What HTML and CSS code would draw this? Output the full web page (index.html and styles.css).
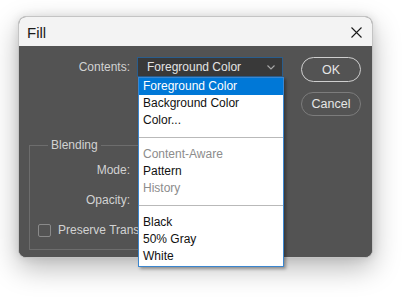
FILE: index.html
```html
<!DOCTYPE html>
<html>
<head>
<meta charset="utf-8">
<link rel="stylesheet" href="styles.css">
</head>
<body>
<div class="dialog">
  <div class="titlebar">
    <span class="title">Fill</span>
    <svg class="close" width="11" height="11" viewBox="0 0 11 11"><path d="M0.5 0.5 L10.5 10.5 M10.5 0.5 L0.5 10.5" stroke="#1a1a1a" stroke-width="1.1" fill="none"/></svg>
  </div>
  <div class="content">
    <div class="main">
      <div class="row contents-row">
        <span class="lbl lbl-outer">Contents:</span>
        <div class="select">
          <span>Foreground Color</span>
          <svg class="chev" width="8" height="5" viewBox="0 0 8 5"><path d="M0.5 0.5 L4 4 L7.5 0.5" stroke="#a8a8a8" stroke-width="1.1" fill="none"/></svg>
        </div>
      </div>
      <fieldset class="group">
        <legend class="legend">Blending</legend>
        <div class="row grow-row"><span class="lbl">Mode:</span></div>
        <div class="row grow-row"><span class="lbl">Opacity:</span></div>
        <div class="row check-row"><span class="checkbox"></span><span class="check-label">Preserve Transparency</span></div>
      </fieldset>
    </div>
    <div class="buttons">
      <div class="btn btn-ok">OK</div>
      <div class="btn btn-cancel">Cancel</div>
    </div>
    <ul class="menu">
      <li class="item selected">Foreground Color</li>
      <li class="item">Background Color</li>
      <li class="item">Color...</li>
      <li class="sep"></li>
      <li class="item disabled">Content-Aware</li>
      <li class="item">Pattern</li>
      <li class="item disabled">History</li>
      <li class="sep"></li>
      <li class="item">Black</li>
      <li class="item">50% Gray</li>
      <li class="item">White</li>
    </ul>
  </div>
</div>
</body>
</html>
```

FILE: styles.css
```css
* { box-sizing: border-box; }
html, body { margin: 0; padding: 0; background: #ffffff; }
html { height: 100%; }
body {
  min-height: 100%;
  padding: 16px 0 0 18px;
  font-family: "Liberation Sans", Arial, sans-serif;
  font-size: 12px;
}
.dialog {
  width: 355px;
  height: 242px;
  border: 1px solid #c4c4c4;
  border-radius: 8px;
  background: #535353;
  box-shadow: 0 10px 28px rgba(0,0,0,0.28), 0 0 10px rgba(0,0,0,0.10);
  display: flex;
  flex-direction: column;
}
.titlebar {
  height: 29px;
  flex: none;
  background: #f3f3f3;
  border-radius: 7px 7px 0 0;
  display: flex;
  align-items: center;
  justify-content: space-between;
  padding: 0 10px 0 8px;
}
.title {
  font-size: 15px;
  color: #1b1b1b;
  padding-top: 2px;
}
.close { display: block; margin-top: 2px; }
.content {
  position: relative;
  flex: 1;
  display: flex;
  padding: 11px 11px 0 0;
  border-radius: 0 0 7px 7px;
  background: #535353;
}
.main {
  flex: 1;
  display: flex;
  flex-direction: column;
}
.row {
  display: flex;
  align-items: center;
  height: 20px;
}
.lbl {
  color: #d2d2d2;
  text-align: right;
  flex: none;
}
.lbl-outer { width: 111px; margin-right: 7px; }
.select {
  width: 146px;
  height: 20px;
  background: #393939;
  border: 1px solid #2a5d8c;
  color: #e4e4e4;
  display: flex;
  align-items: center;
  justify-content: space-between;
  padding: 0 7px 0 9px;
}
.chev { display: block; }
.group {
  margin: 60px 0 0 10px;
  padding: 0 0 9px 0;
  width: 252px;
  border: 1px solid #6d6d6d;
  min-width: 0;
}
.legend {
  margin-left: 18px;
  padding: 0 3px;
  color: #d2d2d2;
  line-height: 16px;
  font-size: 12px;
}
.group .lbl { width: 100px; }
.grow-row { margin-top: 7px; }
.grow-row + .grow-row { margin-top: 10px; }
.check-row { margin-top: 10px; }
.checkbox {
  width: 13px;
  height: 13px;
  border: 1px solid #8a8a8a;
  border-radius: 2px;
  margin-left: 8px;
  margin-right: 7px;
  flex: none;
}
.check-label {
  color: #d2d2d2;
  white-space: nowrap;
  width: 80px;
  overflow: hidden;
}
.buttons {
  width: 60px;
  flex: none;
  display: flex;
  flex-direction: column;
  gap: 10px;
}
.btn {
  height: 25px;
  border-radius: 13px;
  display: flex;
  align-items: center;
  justify-content: center;
  color: #e6e6e6;
  font-size: 12.5px;
}
.btn-ok { border: 1.5px solid #cfcfcf; }
.btn-cancel { height: 24px; border: 1px solid #7c7c7c; }
.menu {
  position: absolute;
  left: 119px;
  top: 31px;
  width: 146px;
  margin: 0;
  padding: 0 0 1px 0;
  list-style: none;
  background: #ffffff;
  border: 1px solid #3b86cf;
  box-shadow: 2px 2px 3px rgba(0,0,0,0.35);
  z-index: 2;
}
.item {
  height: 17px;
  line-height: 17px;
  padding-left: 4px;
  color: #111111;
  white-space: nowrap;
}
.item.selected { background: #0078d7; color: #ffffff; }
.item.disabled { color: #8c8c8c; }
.sep {
  height: 17px;
  display: flex;
  align-items: center;
}
.sep::before {
  content: "";
  display: block;
  width: 100%;
  height: 1px;
  background: #b9b9b9;
}
```
